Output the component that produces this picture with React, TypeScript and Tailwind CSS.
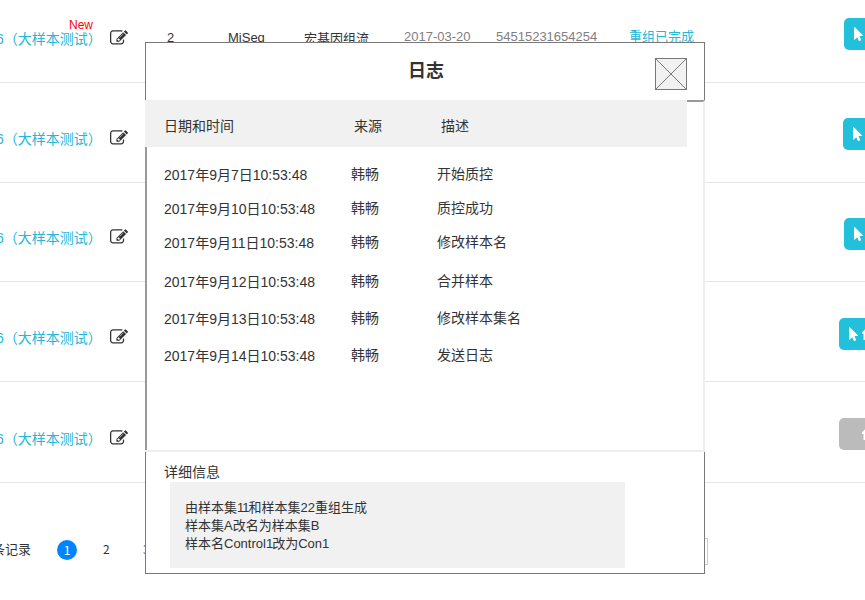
const logs = [
  { date: '2017年9月7日10:53:48', text: '开始质控', gap: 'mt-[17px]' },
  { date: '2017年9月10日10:53:48', text: '质控成功', gap: 'mt-[14px]' },
  { date: '2017年9月11日10:53:48', text: '修改样本名', gap: 'mt-[14px]' },
  { date: '2017年9月12日10:53:48', text: '合并样本', gap: 'mt-[19px]' },
  { date: '2017年9月13日10:53:48', text: '修改样本集名', gap: 'mt-[17px]' },
  { date: '2017年9月14日10:53:48', text: '发送日志', gap: 'mt-[17px]' },
];

const rows = [
  { height: 'h-[100px]', label: 'mt-[46px]', action: 'mt-[35px]', button: 'w-[21px] pl-[10px] bg-[#23c0db]', kind: 'pointer', first: true },
  { height: 'h-[100px]', label: 'mt-[46px]', action: 'mt-[35px]', button: 'w-[22px] pl-[10px] bg-[#23c0db]', kind: 'pointer' },
  { height: 'h-[99px]', label: 'mt-[45px]', action: 'mt-[35px]', button: 'w-[21px] pl-[10px] bg-[#23c0db]', kind: 'pointer' },
  { height: 'h-[100px]', label: 'mt-[46px]', action: 'mt-[36px]', button: 'w-[26px] pl-[10px] bg-[#23c0db]', kind: 'both' },
  { height: 'h-[101px]', label: 'mt-[47px]', action: 'mt-[36px]', button: 'w-[26px] pl-[23px] bg-[#bbbbbb]', kind: 'up' },
];

function EditIcon() {
  return (
    <svg viewBox="0 0 1792 1792" className="ml-[8px] size-[18px] shrink-0 fill-[#333]">
      <path d="M888 1184l116-116-152-152-116 116v56h96v96h56zm440-720q-16-16-33 1l-350 350q-17 17-1 33t33-1l350-350q17-17 1-33zm80 594v190q0 119-84.5 203.5t-203.5 84.5h-832q-119 0-203.5-84.5t-84.5-203.5v-832q0-119 84.5-203.5t203.5-84.5h832q63 0 117 25 15 7 18 23 3 17-9 29l-49 49q-14 14-32 8-23-6-45-6h-832q-66 0-113 47t-47 113v832q0 66 47 113t113 47h832q66 0 113-47t47-113v-126q0-13 9-22l64-64q15-15 35-7t20 29zm-96-738l288 288-672 672h-288v-288zm444 132l-92 92-288-288 92-92q28-28 68-28t68 28l152 152q28 28 28 68t-28 68z" />
    </svg>
  );
}

function PointerIcon() {
  return (
    <svg viewBox="0 0 1152 1792" className="h-[14px] w-[9px] shrink-0 fill-white">
      <path d="M1133 1043q31 30 14 69-17 40-59 40h-382l201 476q10 25 0 49t-34 35l-177 75q-25 10-49 0t-35-34l-191-452-312 312q-19 19-45 19-12 0-24-5-40-17-40-59v-1504q0-42 40-59 12-5 24-5 27 0 45 19z" />
    </svg>
  );
}

function UpIcon() {
  return (
    <svg viewBox="0 0 10 14" className="h-[14px] w-[10px] shrink-0 fill-white">
      <path d="M5 0L0 5.5V7H1.5V13H8.5V7H10V5.5Z" />
    </svg>
  );
}

function SampleRow({ row }: { row: (typeof rows)[number] }) {
  return (
    <div className={`flex items-start border-b border-[#e4e4e4] ${row.height}`}>
      <div className={`flex shrink-0 items-start ${row.label}`}>
        <div className="relative -ml-1 w-[106px] shrink-0 whitespace-nowrap leading-5 text-[#23b7d9]">
          6（大样本测试）
          {row.first && <span className="absolute left-[73px] top-[-12px] text-[12px] leading-4 text-[#ff0000]">New</span>}
        </div>
        <EditIcon />
      </div>
      {row.first && (
        <div className="mt-[45px] flex whitespace-nowrap text-[13px] leading-5 text-[#333]">
          <span className="ml-[39px] w-[61px]">2</span>
          <span className="w-[76px]">MiSeq</span>
          <span className="w-[100px] pt-px">宏基因组流</span>
          <span className="-mt-px w-[92px] text-[#808080]">2017-03-20</span>
          <span className="-mt-px w-[133px] text-[#808080]">54515231654254</span>
          <span className="-mt-px text-[#23b7d9]">重组已完成</span>
        </div>
      )}
      <div className={`ml-auto flex h-8 shrink-0 items-center gap-[4px] overflow-hidden rounded-l-[5px] ${row.action} ${row.button}`}>
        {row.kind !== 'up' && <PointerIcon />}
        {row.kind !== 'pointer' && <UpIcon />}
      </div>
    </div>
  );
}

function LogDialog() {
  return (
    <section className="absolute left-[145px] top-[42px] flex h-[532px] w-[560px] flex-col bg-white text-[#333]">
      <header className="flex h-[58px] shrink-0 justify-between border-x border-t border-[#797979] pr-[17px]">
        <h2 className="ml-[262px] mt-[15px] text-[18px] font-bold leading-[26px]">日志</h2>
        <svg viewBox="0 0 32 32" className="mt-[15px] size-8 fill-[#f2f2f2] stroke-[#797979]">
          <rect x=".5" y=".5" width="31" height="31" />
          <path d="M.5.5L31.5 31.5M31.5.5L.5 31.5" />
        </svg>
      </header>
      <div className="flex h-[47px] shrink-0 leading-5">
        <div className="flex w-[542px] bg-[#f1f1f1] pt-4">
          <span className="w-[209px] pl-[19px]">日期和时间</span>
          <span className="w-[87px]">来源</span>
          <span>描述</span>
        </div>
        <div className="flex-1 border-r-2 border-t-2 border-r-[#eee] border-t-[#999]" />
      </div>
      <div className="h-[303px] shrink-0 overflow-hidden border-l-2 border-r-2 border-l-[#999] border-r-[#eee]">
        {logs.map((log) => (
          <div key={log.date} className={`flex h-5 whitespace-nowrap leading-5 ${log.gap}`}>
            <span className="w-[204px] pl-[17px] pt-px">{log.date}</span>
            <span className="w-[86px]">韩畅</span>
            <span>{log.text}</span>
          </div>
        ))}
      </div>
      <div className="h-[2px] shrink-0 bg-[#eee]" />
      <footer className="flex-1 border-x border-b border-[#797979]">
        <h3 className="ml-[18px] mt-[10px] h-5 leading-5">详细信息</h3>
        <div className="ml-6 h-[86px] w-[455px] bg-[#f1f1f1] pl-[15px] pt-[17px] text-[13px] leading-[18px]">
          <p>由样本集<span className="tracking-[-1px]">11</span>和样本集22重组生成</p>
          <p>样本集A改名为样本集B</p>
          <p>样本名Control<span className="tracking-[-1px]">1</span>改为Con1</p>
        </div>
      </footer>
    </section>
  );
}

export default function App() {
  return (
    <main
      lang="zh-CN"
      className="relative h-[600px] w-[865px] overflow-hidden bg-white font-['Liberation_Sans','Noto_Sans_CJK_SC',sans-serif] text-[14px]"
    >
      <div className="-mt-[17px]">
        {rows.map((row, i) => (
          <SampleRow key={i} row={row} />
        ))}
      </div>
      <div className="flex h-10 items-start text-[#333]">
        <div className="mt-[56px] flex h-5 items-center font-['Noto_Sans_CJK_SC',sans-serif] text-[12px]">
          <span className="-ml-[8px] w-[65px] shrink-0 text-[13px]">条记录</span>
          <span className="mt-[2px] flex size-5 items-center justify-center rounded-full bg-[#0084ff] pb-px text-white">1</span>
          <span className="ml-[26px] w-[40px]">2</span>
          <span>3</span>
        </div>
        <div className="ml-auto mr-[157px] mt-[55px] h-[27px] w-[48px] shrink-0 border border-[#ccc]" />
      </div>
      <LogDialog />
    </main>
  );
}
